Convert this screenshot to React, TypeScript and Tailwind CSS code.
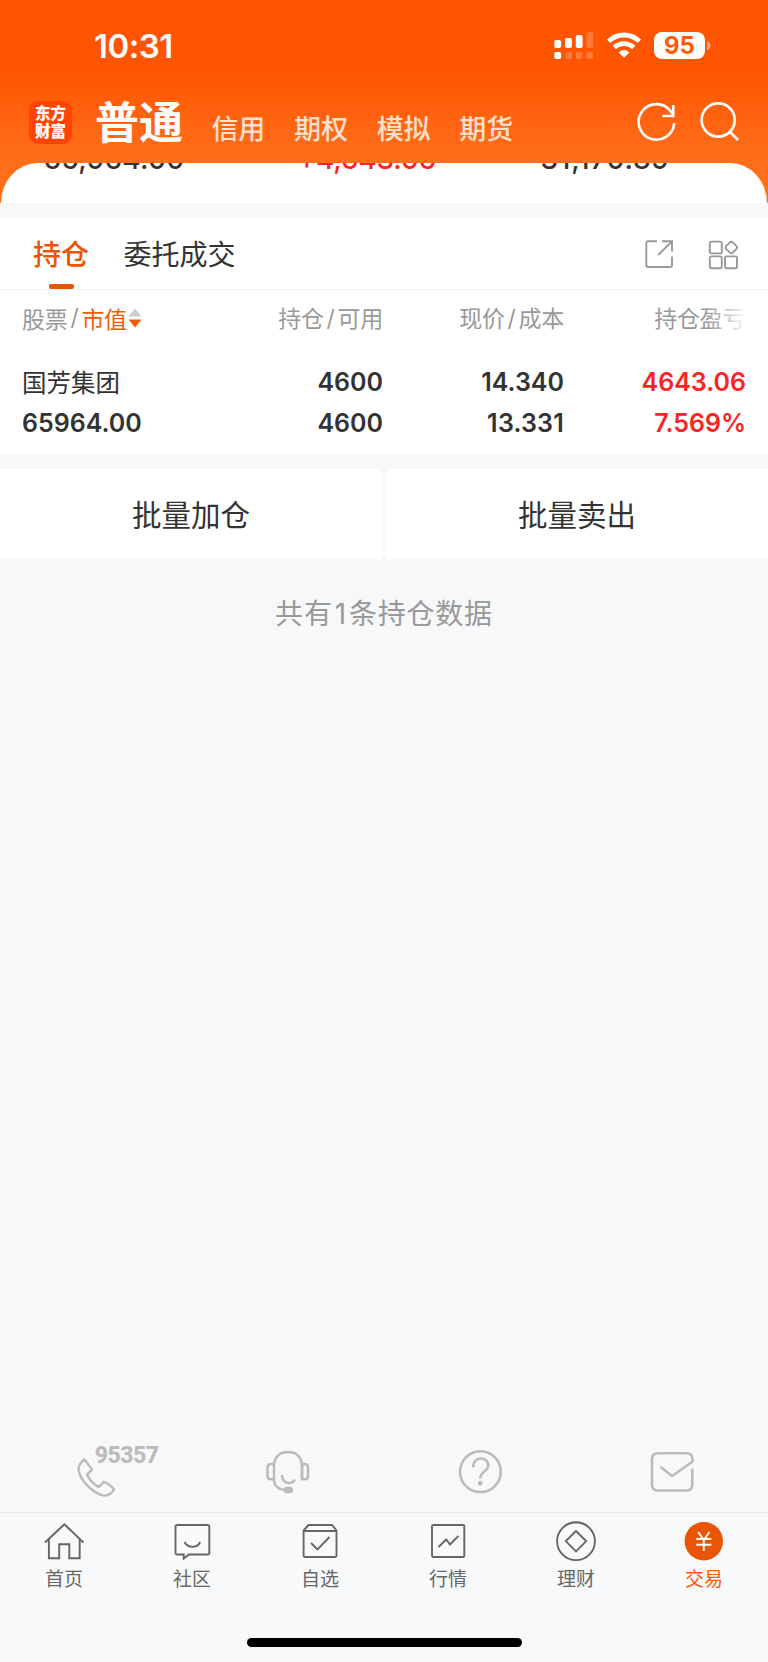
import React from "react";

const accounts = ["信用", "期权", "模拟", "期货"];

const CJK = "font-['Noto_Sans_CJK_SC',sans-serif]";
const NUM = "font-['Inter',sans-serif]";

const StatusBar: React.FC = () => (
  <div className="h-20 flex items-start pl-[94px] pr-[57px] justify-between text-white">
    <span className="font-['Inter',sans-serif] text-[33px] leading-8 font-semibold tracking-[-0.5px] mt-[30px]">10:31</span>
    <div className="flex mt-8">
      {/* Signal */}
      <svg width="40" height="28" viewBox="0 0 40 28" fill="#fff">
        <rect x="0.3" y="8" width="6.8" height="8" rx="1.8" />
        <rect x="11" y="6" width="6.8" height="10" rx="1.8" />
        <rect x="21.8" y="3" width="6.8" height="13" rx="1.8" />
        <rect x="32.4" y="0" width="6.8" height="16" rx="1.8" opacity="0.22" />
        <rect x="0.3" y="20" width="6.8" height="7" rx="1.8" />
        <rect x="11" y="20" width="6.8" height="7" rx="1.8" opacity="0.22" />
        <rect x="21.8" y="20" width="6.8" height="7" rx="1.8" opacity="0.22" />
        <rect x="32.4" y="20" width="6.8" height="7" rx="1.8" opacity="0.22" />
      </svg>
      {/* Wifi */}
      <svg className="ml-[13px]" width="34" height="26" viewBox="0 0 34 26" fill="none" stroke="#fff" strokeWidth="4.8">
        <path d="M1.6 9.3 A22 22 0 0 1 32.4 9.3" />
        <path d="M7.3 15.5 A14 14 0 0 1 26.7 15.5" />
        <path d="M11.6 20.4 Q17 15.8 22.4 20.4 L17 25.8 Z" fill="#fff" stroke="none" />
      </svg>
      {/* Battery */}
      <div className="ml-[13px] w-[51px] h-[27px] rounded-[8px] bg-white flex items-center justify-center">
        <span className="font-['Inter',sans-serif] text-[24px] leading-6 font-bold text-[#ff5a05]">95</span>
      </div>
      <svg className="ml-[1px]" width="5" height="27" viewBox="0 0 5 27">
        <path d="M1 9 Q4.5 10.5 4.5 13.5 Q4.5 16.5 1 18 Z" fill="#fff" opacity="0.5" />
      </svg>
    </div>
  </div>
);

const AccountBar: React.FC = () => (
  <div className={`${CJK} h-[83px] flex items-start pl-[29px] pr-[29px] text-white`}>
    <div className="w-[43px] h-[43px] mt-[21px] rounded-[9px] bg-[#ff4405] text-[15.5px] leading-[17.5px] font-black text-center pt-[3px]">
      东方
      <br />
      财富
    </div>
    <span className="ml-[23px] mt-[16px] text-[44px] leading-[48px] font-bold">普通</span>
    <div className="flex gap-[29px] ml-[28.5px] mt-[32px] text-[27px] leading-8 font-medium text-[#ffe0cf] tracking-[-0.2px]">
      {accounts.map((name) => (
        <span key={name}>{name}</span>
      ))}
    </div>
    <svg className="ml-auto mt-[22px]" width="40" height="40" viewBox="0 0 40 40" fill="none" stroke="#fff" strokeWidth="2.6">
      <path d="M37.2 21 A17.8 17.8 0 1 1 33.8 9.4 L36 13" />
      <path d="M36.2 3 V14 H25.5" />
    </svg>
    <svg className="ml-[23px] mt-[22px]" width="39" height="40" viewBox="0 0 39 40" fill="none" stroke="#fff" strokeWidth="2.6">
      <circle cx="18.2" cy="18" r="16.6" />
      <path d="M29.5 29.3 L38 38" />
    </svg>
  </div>
);

const Slash: React.FC = () => <span className="font-['Inter',sans-serif] inline-block w-[14px] text-center">/</span>;

const Holdings: React.FC = () => (
  <div className="relative bg-white h-[164px] pl-[22px] pr-[22px]">
    <div className={`${CJK} grid grid-cols-[180px_181px_181px_181px] text-[23px] leading-[34px] pt-[10px] text-[#999] text-right whitespace-nowrap tracking-[-0.3px]`}>
      <div className="flex items-center text-left">
        股票
        <Slash />
        <span className="text-[#f95a08]">市值</span>
        <svg className="ml-[1px]" width="14" height="20" viewBox="0 0 14 20">
          <path d="M7 0.5 L13.5 8.5 H0.5 Z" fill="#ccc" />
          <path d="M7 19.5 L13.5 11.5 H0.5 Z" fill="#f95a08" />
        </svg>
      </div>
      <div>持仓<Slash />可用</div>
      <div>现价<Slash />成本</div>
      <div>持仓盈亏</div>
    </div>
    <div className="absolute right-[22px] top-[8px] w-10 h-10 bg-linear-to-r from-white/0 to-white/90" />
    <div className={`${NUM} grid grid-cols-[180px_181px_181px_182px] text-[25px] leading-[40.5px] font-semibold text-[#333] text-right mt-[26px]`}>
      <div className={`${CJK} font-normal text-left text-[24.5px]`}>国芳集团</div>
      <div>4600</div>
      <div>14.340</div>
      <div className="text-[#fb2323]">4643.06</div>
      <div className="text-left">65964.00</div>
      <div>4600</div>
      <div className="tracking-[0.2px]">13.331</div>
      <div className="text-[#fb2323]">7.569%</div>
    </div>
  </div>
);

const services = [
  {
    label: "服务热线",
    icon: (
      <div className="flex w-[82px] h-[54px] ml-[43px]">
        <svg className="mt-[11px]" width="40" height="42" viewBox="0 0 40 42" fill="none" stroke="#bbb" strokeWidth="2.5" strokeLinejoin="round">
          <path d="M7.7 2 L15.2 12.2 C14 14.5 12 15.5 10.2 17.5 C12.5 22.5 17 27.5 22 30 C24.5 28.8 25.5 26.5 27.2 25 C31.5 26.2 35 29 37.8 33 C35.5 37 30.5 39.8 26.5 38.8 C15 35.5 4 24 1.6 13 C1 8.5 4.5 4 7.7 2 Z" />
        </svg>
        <span className="-ml-[21px] -mt-[1px] font-['Roboto',sans-serif] text-[23px] leading-[22px] font-extrabold text-[#bbb] tracking-[-0.5px]">95357</span>
      </div>
    ),
  },
  {
    label: "在线客服",
    icon: (
      <svg width="44" height="54" viewBox="0 0 44 54" fill="none" stroke="#bbb" strokeWidth="2.5">
        <path d="M8 34 V18.5 A12 13 0 0 1 20 6.2 H24 A12 13 0 0 1 36 18.5 V32" />
        <path d="M8 18 H5 Q1.5 18 1.5 21.5 V30 Q1.5 33.3 5 33.3 H8 C8 40 13 44 20 44" />
        <path d="M36 18 H38.5 Q42 18 42 21.5 V30 Q42 33.3 38.5 33.3 H36 Z" />
        <path d="M16 29 C16 38 26 39 29 33.5" />
        <rect x="18.8" y="42" width="7" height="4" rx="2" fill="#bbb" />
      </svg>
    ),
  },
  {
    label: "帮助中心",
    icon: (
      <svg width="44" height="54" viewBox="0 0 44 54" fill="none" stroke="#bbb" strokeWidth="2.5">
        <circle cx="22.4" cy="25.7" r="20.4" />
        <path d="M15.3 21.3 C14.5 10 30.3 10 30.3 19.5 C30.3 25 22.2 25.5 22.2 32.5" />
        <circle cx="22.2" cy="37.2" r="2.4" fill="#bbb" stroke="none" />
      </svg>
    ),
  },
  {
    label: "我的消息",
    icon: (
      <svg width="44" height="54" viewBox="0 0 44 54" fill="none" stroke="#bbb" strokeWidth="2.5">
        <path d="M10.5 21 L22.2 30 L42.5 15.5 V13.5 Q42.5 7.3 36.5 7.3 H8 Q2 7.3 2 13.3 V38.5 Q2 44.5 8 44.5 H36.5 Q42.3 44.5 42.3 38.5 V22.5" />
      </svg>
    ),
  },
];

const navItems = [
  {
    label: "首页",
    icon: (
      <>
        <path d="M1 21.5 L20.4 3.2 L39.5 21.5" />
        <path d="M4.9 18 V37.3 H15.2 V23.3 H25.3 V37.3 H35.7 V18" />
      </>
    ),
  },
  {
    label: "社区",
    icon: (
      <>
        <path d="M5.5 4 H35.5 Q37.3 4 37.3 5.8 V32 Q37.3 33.5 35.5 33.5 H17 L11.7 37.5 V33.5 H5 Q3.5 33.5 3.5 32 V5.8 Q3.5 4 5.5 4 Z" />
        <path d="M12.5 21 C16 27.5 25 27.5 28.2 21" />
      </>
    ),
  },
  {
    label: "自选",
    icon: (
      <>
        <path d="M3.6 9.5 L8.5 4 H32 L36.5 9.5 V34.5 Q36.5 36 35 36 H5 Q3.6 36 3.6 34.5 Z M3.6 10 H36.5" />
        <path d="M11 22 L17.5 28.5 L29.5 16" />
      </>
    ),
  },
  {
    label: "行情",
    icon: (
      <>
        <rect x="4" y="4" width="32.3" height="32" rx="1.2" />
        <path d="M10.5 26 L18.2 18.5 L22 23.5 L30.5 14.8" />
      </>
    ),
  },
  {
    label: "理财",
    icon: (
      <>
        <circle cx="20" cy="20.2" r="18.9" />
        <path d="M20 10 L30.2 20.2 L20 30.4 L9.8 20.2 Z" strokeLinejoin="round" />
      </>
    ),
  },
  {
    label: "交易",
    active: true,
    icon: (
      <>
        <circle cx="19.8" cy="20.2" r="19.2" fill="#ea5504" stroke="none" />
        <path d="M14.2 11 L19.8 19 L25.4 11 M19.8 19 V30 M12.2 18 H27.3 M12.2 23.7 H27.3" stroke="#fff" />
      </>
    ),
  },
];

const BottomNav: React.FC = () => (
  <nav className="h-[150px] shrink-0 bg-[#f8f9fb] border-t border-[#e6e7e9] flex flex-col items-center">
    <div className="w-full grid grid-cols-6">
      {navItems.map(({ label, icon, active }) => (
        <div key={label} className={`${CJK} flex flex-col items-center pt-[8px] text-[19px] leading-[26px] ${active ? "text-[#f95a08]" : "text-[#666]"}`}>
          <svg width="40" height="40" viewBox="0 0 40 40" fill="none" stroke="#666" strokeWidth="1.9">
            {icon}
          </svg>
          <span className="mt-[4px]">{label}</span>
        </div>
      ))}
    </div>
    <div className="mt-[47px] w-[275px] h-[9px] rounded-full bg-black" />
  </nav>
);

const App: React.FC = () => {
  return (
    <div className="w-[768px] h-[1662px] flex flex-col overflow-hidden bg-[#f7f8fa]">
      <header className="shrink-0 h-[203px] bg-linear-to-b from-[#ff5500] from-35% to-[#ff6e19] to-78%">
        <StatusBar />
        <AccountBar />
        {/* Asset summary, scrolled under the header */}
        <div className={`${NUM} h-10 mx-[0.6px] overflow-hidden rounded-t-[37px_40px] bg-white`}>
          <div className="-mt-[18px] flex text-[28px] leading-7 font-medium text-[#333]">
            <span className="w-[255px] pl-[43px] tracking-[0.2px]">65,964.00</span>
            <span className="w-[285px] pl-[42px] text-[#fb2323] tracking-[-0.2px]">+4,643.06</span>
            <span className="tracking-[0.7px]">31,170.89</span>
          </div>
        </div>
      </header>

      <div className={`${CJK} shrink-0 mt-[15px] h-[72px] flex items-start bg-white border-b border-[#f0f1f3] pl-[33px] pr-[29px] text-[28px] leading-9 text-[#333]`}>
        <div className="flex flex-col items-center pt-[17px] font-medium text-[#ea5504]">
          持仓
          <div className="mt-[13px] w-[25px] h-[5px] rounded-[2px] bg-[#ea5504]" />
        </div>
        <span className="ml-[34.5px] mt-[17px]">委托成交</span>
        <svg className="ml-auto mt-[22px]" width="29" height="29" viewBox="0 0 29 29" fill="none" stroke="#999" strokeWidth="1.9">
          <path d="M12 1.3 H3 Q1.3 1.3 1.3 3 V25.3 Q1.3 27 3 27 H25.3 Q27 27 27 25.3 V16.5" />
          <path d="M17 1.3 H27 V11.5 M27 1.3 L13.2 15" />
        </svg>
        <svg className="ml-[34px] mt-[22px]" width="31" height="30" viewBox="0 0 31 30" fill="none" stroke="#999" strokeWidth="1.9">
          <rect x="1.8" y="1.6" width="12" height="11.8" rx="1.6" />
          <rect x="1.8" y="16.4" width="12" height="11.8" rx="1.6" />
          <rect x="17" y="16.4" width="12" height="11.8" rx="1.6" />
          <rect x="18.6" y="2.8" width="9.4" height="9.4" rx="2.4" transform="rotate(45 23.3 7.5)" />
        </svg>
      </div>

      <Holdings />

      <div className={`${CJK} shrink-0 mt-[15px] grid grid-cols-2 gap-1 text-[29.5px] text-center text-[#333]`}>
        <button className="h-[90px] pb-[2px] bg-white">批量加仓</button>
        <button className="h-[90px] pb-[2px] bg-white">批量卖出</button>
      </div>

      <p className={`${CJK} mt-[33px] text-center text-[28px] leading-10 text-[#999] tracking-[0.8px]`}>
        共有<span className="font-['Inter',sans-serif] px-[2px]">1</span>条持仓数据
      </p>

      {/* Service shortcuts, cut off by the bottom nav */}
      <div className={`${CJK} mt-auto h-[67px] overflow-hidden grid grid-cols-4 text-[20.5px] leading-6 text-[#666]`}>
        {services.map(({ label, icon }) => (
          <div key={label} className="flex flex-col items-center pt-[1px]">
            {icon}
            <span className="mt-[9px]">{label}</span>
          </div>
        ))}
      </div>

      <BottomNav />
    </div>
  );
};

export default App;
